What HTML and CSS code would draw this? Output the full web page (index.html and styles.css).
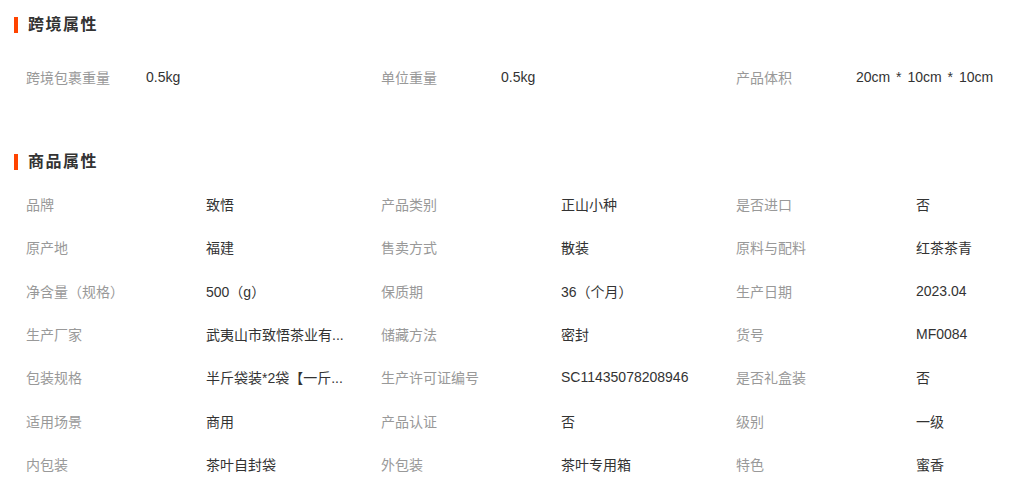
FILE: index.html
```html
<!DOCTYPE html>
<html lang="zh">
<head>
<meta charset="utf-8">
<link rel="stylesheet" href="styles.css">
</head>
<body>
<div class="page">
  <section class="section first">
    <h2 class="title">跨境属性</h2>
    <div class="grid cb">
      <div class="cell"><span class="label">跨境包裹重量</span><span class="value">0.5kg</span></div>
      <div class="cell"><span class="label">单位重量</span><span class="value">0.5kg</span></div>
      <div class="cell"><span class="label">产品体积</span><span class="value">20cm * 10cm * 10cm</span></div>
    </div>
  </section>
  <section class="section second">
    <h2 class="title">商品属性</h2>
    <div class="grid attrs">
      <div class="cell"><span class="label">品牌</span><span class="value">致悟</span></div>
      <div class="cell"><span class="label">产品类别</span><span class="value">正山小种</span></div>
      <div class="cell"><span class="label">是否进口</span><span class="value">否</span></div>
      <div class="cell"><span class="label">原产地</span><span class="value">福建</span></div>
      <div class="cell"><span class="label">售卖方式</span><span class="value">散装</span></div>
      <div class="cell"><span class="label">原料与配料</span><span class="value">红茶茶青</span></div>
      <div class="cell"><span class="label">净含量（规格）</span><span class="value">500（g）</span></div>
      <div class="cell"><span class="label">保质期</span><span class="value">36（个月）</span></div>
      <div class="cell"><span class="label">生产日期</span><span class="value">2023.04</span></div>
      <div class="cell"><span class="label">生产厂家</span><span class="value">武夷山市致悟茶业有...</span></div>
      <div class="cell"><span class="label">储藏方法</span><span class="value">密封</span></div>
      <div class="cell"><span class="label">货号</span><span class="value">MF0084</span></div>
      <div class="cell"><span class="label">包装规格</span><span class="value">半斤袋装*2袋【一斤...</span></div>
      <div class="cell"><span class="label">生产许可证编号</span><span class="value">SC11435078208946</span></div>
      <div class="cell"><span class="label">是否礼盒装</span><span class="value">否</span></div>
      <div class="cell"><span class="label">适用场景</span><span class="value">商用</span></div>
      <div class="cell"><span class="label">产品认证</span><span class="value">否</span></div>
      <div class="cell"><span class="label">级别</span><span class="value">一级</span></div>
      <div class="cell"><span class="label">内包装</span><span class="value">茶叶自封袋</span></div>
      <div class="cell"><span class="label">外包装</span><span class="value">茶叶专用箱</span></div>
      <div class="cell"><span class="label">特色</span><span class="value">蜜香</span></div>
    </div>
  </section>
</div>
</body>
</html>
```
FILE: styles.css
```css
html, body {
  margin: 0;
  padding: 0;
  background: #fff;
}
body {
  font-family: "Liberation Sans", "Noto Sans CJK SC", sans-serif;
  font-size: 14px;
  color: #333;
}
.page {
  width: 1011px;
  overflow: hidden;
}
.section.first {
  padding-top: 3px;
}
.section.second {
  margin-top: 44px;
}
.title {
  margin: 0;
  height: 44px;
  line-height: 44px;
  font-size: 16px;
  font-weight: bold;
  letter-spacing: 1.5px;
  color: #333;
  display: flex;
  align-items: center;
  padding-left: 14px;
}
.second .title {
  height: 40px;
  line-height: 40px;
}
.title::before {
  content: "";
  width: 4px;
  height: 16px;
  background: #ff4400;
  margin-right: 10px;
}
.grid {
  display: grid;
  grid-template-columns: 355px 355px 1fr;
  padding-left: 26px;
}
.grid.cb {
  padding-top: 8px;
}
.cell {
  display: flex;
  align-items: center;
  height: 43.33px;
  white-space: nowrap;
}
.label {
  color: #999;
  flex: none;
}
.cb .label {
  width: 120px;
}
.attrs .label {
  width: 180px;
}
.value {
  color: #333;
  white-space: nowrap;
}
.cb .value {
  word-spacing: 2px;
}
```
